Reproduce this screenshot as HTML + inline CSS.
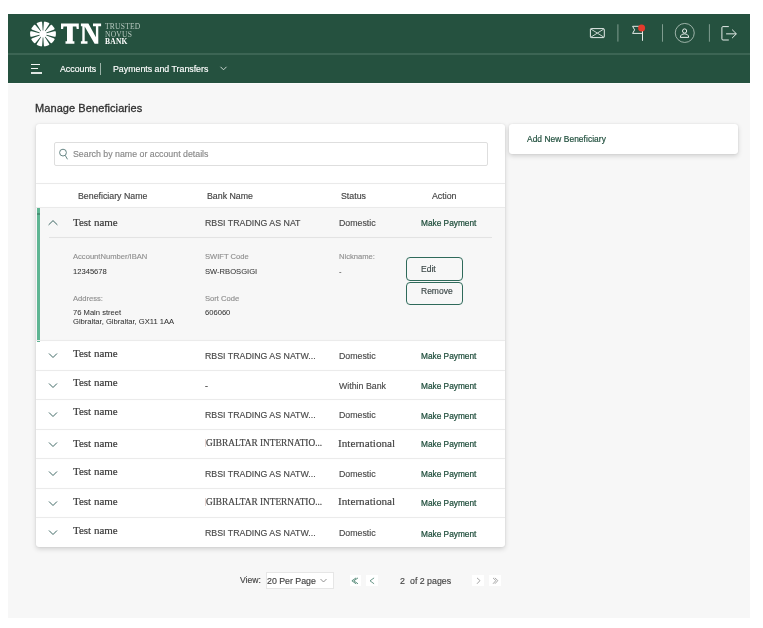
<!DOCTYPE html>
<html><head><meta charset="utf-8">
<style>
html,body{margin:0;padding:0;background:#fff;width:763px;height:628px;overflow:hidden;}
body{position:relative;font-family:"Liberation Sans",sans-serif;}
.a{position:absolute;white-space:nowrap;line-height:1;will-change:transform;-webkit-text-stroke:0.15px currentColor;}
.sf{font-family:"Liberation Serif",serif;-webkit-text-stroke:0.18px currentColor;}
#page{position:absolute;left:8px;top:14px;width:742px;height:604px;background:#f7f7f7;}
#hdr{position:absolute;left:8px;top:14px;width:742px;height:69px;background:#25513f;}
#sep{position:absolute;left:8px;top:53px;width:742px;height:2px;background:#3c6554;}
.card{position:absolute;background:#fff;border-radius:3px;box-shadow:0 0 1.5px rgba(0,0,0,0.10),0 2px 5px rgba(0,0,0,0.16);}
.hl{position:absolute;height:1px;background:#ebebeb;box-shadow:0 0 1px rgba(0,0,0,0.04);}
.nav{color:#fff;font-size:8.8px;}
.th{color:#444;font-size:8.8px;}
.tn{color:#3a3a3a;font-size:11px;}
.bk{color:#4a4a4a;font-size:8.8px;}
.mp{color:#1e4d3b;font-size:8.3px;letter-spacing:0;-webkit-text-stroke:0.22px #1e4d3b;}
.lb{color:#909090;font-size:7.6px;}
.vl{color:#333;font-size:7.6px;-webkit-text-stroke:0.05px currentColor;}
.vdiv{position:absolute;width:1px;background:#8aa59a;}
</style></head><body>
<div id="page"></div>
<div id="hdr"></div>
<div id="sep"></div>
<div class="a" style="left:8px;top:83px;width:742px;height:1px;background:#fbfbfb"></div>

<!-- logo flower -->
<svg class="a" style="left:28.8px;top:20.5px" width="28" height="26" viewBox="-14 -13 28 26">
  <ellipse cx="0" cy="0" rx="12.9" ry="12.4" fill="#fff"/>
  <g fill="#25513f">
    <polygon points="-0.3,-3.6 0.3,-3.6 0.85,-11.5 1.6,-14 -1.6,-14 -0.85,-11.5" transform="rotate(0)"/>
    <polygon points="-0.3,-3.6 0.3,-3.6 0.85,-11.5 1.6,-14 -1.6,-14 -0.85,-11.5" transform="rotate(36)"/>
    <polygon points="-0.3,-3.6 0.3,-3.6 0.85,-11.5 1.6,-14 -1.6,-14 -0.85,-11.5" transform="rotate(72)"/>
    <polygon points="-0.3,-3.6 0.3,-3.6 0.85,-11.5 1.6,-14 -1.6,-14 -0.85,-11.5" transform="rotate(108)"/>
    <polygon points="-0.3,-3.6 0.3,-3.6 0.85,-11.5 1.6,-14 -1.6,-14 -0.85,-11.5" transform="rotate(144)"/>
    <polygon points="-0.3,-3.6 0.3,-3.6 0.85,-11.5 1.6,-14 -1.6,-14 -0.85,-11.5" transform="rotate(180)"/>
    <polygon points="-0.3,-3.6 0.3,-3.6 0.85,-11.5 1.6,-14 -1.6,-14 -0.85,-11.5" transform="rotate(216)"/>
    <polygon points="-0.3,-3.6 0.3,-3.6 0.85,-11.5 1.6,-14 -1.6,-14 -0.85,-11.5" transform="rotate(252)"/>
    <polygon points="-0.3,-3.6 0.3,-3.6 0.85,-11.5 1.6,-14 -1.6,-14 -0.85,-11.5" transform="rotate(288)"/>
    <polygon points="-0.3,-3.6 0.3,-3.6 0.85,-11.5 1.6,-14 -1.6,-14 -0.85,-11.5" transform="rotate(324)"/>
  </g>
</svg>
<svg class="a" style="left:0;top:0" width="110" height="50" viewBox="0 0 110 50">
  <path fill="#fff" d="M61 23.6 H78.8 V29 H76.7 L76.3 26.4 H72.8 V41.3 H74.4 V43.8 H65.5 V41.3 H67 V26.4 H63.5 L63.1 29 H61 Z"/>
  <path fill="#fff" d="M80.9 23.6 H88.4 L95.9 37.2 V26.3 H93 V23.6 H101.1 V26.3 H98.3 V43.8 H94.6 L84.7 26.6 V41.3 H87.5 V43.8 H80.9 V41.3 H82.3 V26.3 H80.9 Z"/>
</svg>
<div class="a sf" style="left:105px;top:23.2px;font-size:7.5px;color:#b8c9c0;letter-spacing:0.25px;-webkit-text-stroke:0">TRUSTED</div>
<div class="a sf" style="left:105px;top:30.8px;font-size:7.5px;color:#b8c9c0;letter-spacing:0.25px;-webkit-text-stroke:0">NOVUS</div>
<div class="a sf" style="left:105px;top:38.3px;font-size:7.5px;color:#fff;font-weight:bold;letter-spacing:0.25px;-webkit-text-stroke:0">BANK</div>

<!-- header right icons -->
<svg class="a" style="left:0;top:0" width="763" height="60" viewBox="0 0 763 60">
  <g fill="none" stroke="#e6ece9" stroke-width="1">
    <rect x="590.4" y="28.6" width="13.9" height="9" rx="0.8"/>
    <path d="M590.8 29 L597.35 33.1 L603.9 29 M590.8 37.2 L597.35 33.1 L603.9 37.2" stroke-width="0.85"/>
    <path d="M642.5 26 V40.8 M642.5 26.3 H632.6 L634.6 29.85 L632.6 33.4 H642.5"/>
    <circle cx="684.75" cy="32.95" r="9.5" stroke="#b3c5bc" stroke-width="0.85"/>
    <circle cx="684.6" cy="31" r="2.1"/>
    <path d="M680.3 37.4 C680.3 34.8 682.4 33.9 684.5 33.9 C686.6 33.9 688.7 34.8 688.7 37.4 Z"/>
    <path d="M728.8 26.6 H723 Q721.9 26.6 721.9 27.7 V38.9 Q721.9 40 723 40 H728.8"/>
    <path d="M726.1 33.85 H736.2 M732.1 29.6 L736.4 33.85 L732.1 38.1"/>
  </g>
  <circle cx="641.6" cy="27.9" r="3.5" fill="#e53a2c"/>
  <g fill="#7f9c8f">
    <rect x="617.4" y="24.3" width="1" height="17.3"/>
    <rect x="662" y="24.2" width="1" height="17.5"/>
    <rect x="708.9" y="24.2" width="1" height="17.5"/>
  </g>
</svg>

<!-- nav -->
<div class="a" style="left:30.5px;top:64px;width:8.5px;height:1px;background:#f2f5f3"></div>
<div class="a" style="left:30.5px;top:68.2px;width:6.5px;height:1px;background:#f2f5f3"></div>
<div class="a" style="left:30.5px;top:72.3px;width:10.6px;height:1.5px;background:#dfe6e2"></div>
<div class="a nav" style="left:60px;top:65.1px">Accounts</div>
<div class="vdiv" style="left:100.3px;top:62.5px;height:12px;background:#9bb3a8"></div>
<div class="a nav" style="left:113px;top:65.1px">Payments and Transfers</div>
<svg class="a" style="left:219px;top:65px" width="9" height="7" viewBox="0 0 9 7">
  <path d="M1.5 1.8 L4.5 4.8 L7.5 1.8" fill="none" stroke="#dfe6e2" stroke-width="0.9"/>
</svg>

<!-- title -->
<div class="a" style="left:35.3px;top:102.7px;font-size:11px;color:#2f2f2f;letter-spacing:0.08px;-webkit-text-stroke:0.3px currentColor">Manage Beneficiaries</div>

<!-- main card -->
<div class="card" style="left:36px;top:124px;width:468.7px;height:423px;"></div>
<!-- search -->
<div class="a" style="left:54px;top:142px;width:431.5px;height:21.5px;border:1px solid #dedede;border-radius:2px;background:#fff"></div>
<svg class="a" style="left:57px;top:147px" width="13" height="14" viewBox="0 0 13 14">
  <circle cx="6" cy="5.6" r="3.4" fill="none" stroke="#5f807e" stroke-width="0.95"/>
  <path d="M8.2 8.4 L10.5 12.3" fill="none" stroke="#5f807e" stroke-width="0.95"/>
</svg>
<div class="a" style="left:72.6px;top:149.6px;font-size:8.8px;color:#888">Search by name or account details</div>

<!-- header row -->
<div class="hl" style="left:36px;top:183px;width:468.5px;background:#eaeaea"></div>
<div class="hl" style="left:36px;top:207px;width:468.5px;background:#eaeaea"></div>
<div class="a th" style="left:77.5px;top:192.3px">Beneficiary Name</div>
<div class="a th" style="left:207px;top:192.3px">Bank Name</div>
<div class="a th" style="left:340.5px;top:192.3px">Status</div>
<div class="a th" style="left:432px;top:192.3px">Action</div>

<!-- expanded row -->
<div class="a" style="left:36px;top:207.5px;width:468.5px;height:133px;background:#f7f7f7"></div>
<div class="a" style="left:36.5px;top:207.5px;width:3px;height:133.6px;background:#5fb593"></div>
<div class="a" style="left:36.5px;top:213px;width:3px;height:1.6px;background:#4a8f74"></div>
<svg class="a" style="left:47px;top:218px" width="12" height="9" viewBox="0 0 12 9">
  <path d="M1.6 6.9 L6 2.6 L10.4 6.9" fill="none" stroke="#335f5c" stroke-width="0.95"/>
</svg>
<div class="a sf tn" style="left:73px;top:216.9px">Test name</div>
<div class="a bk" style="left:204.5px;top:219px">RBSI TRADING AS NAT</div>
<div class="a bk" style="left:338.6px;top:219px">Domestic</div>
<div class="a mp" style="left:420.5px;top:219.2px">Make Payment</div>
<div class="hl" style="left:48.5px;top:237px;width:443.5px;background:#e3e3e3"></div>

<div class="a lb" style="left:73px;top:252.6px">AccountNumber/IBAN</div>
<div class="a vl" style="left:73px;top:268.1px">12345678</div>
<div class="a lb" style="left:73px;top:294.9px">Address:</div>
<div class="a vl" style="left:73px;top:308.5px">76 Main street</div>
<div class="a vl" style="left:73px;top:317.6px">Gibraltar, Gibraltar, GX11 1AA</div>

<div class="a lb" style="left:204.7px;top:252.6px">SWIFT Code</div>
<div class="a vl" style="left:204.7px;top:268.1px">SW-RBOSGIGI</div>
<div class="a lb" style="left:204.7px;top:294.9px">Sort Code</div>
<div class="a vl" style="left:204.7px;top:308.5px">606060</div>

<div class="a lb" style="left:338.6px;top:253.2px">Nickname:</div>
<div class="a vl" style="left:338.6px;top:268.1px">-</div>

<div class="a" style="left:406px;top:257.3px;width:55px;height:21.8px;border:1px solid #2f6a5a;border-radius:4px;"></div>
<div class="a" style="left:406px;top:281.5px;width:55px;height:20.8px;border:1px solid #2f6a5a;border-radius:4px;"></div>
<div class="a" style="left:420.7px;top:265px;font-size:8.5px;color:#3a4646">Edit</div>
<div class="a" style="left:420.7px;top:286.8px;font-size:8.5px;color:#3a4646">Remove</div>

<div class="hl" style="left:36px;top:340.3px;width:468.5px;"></div>

<div id="rows"></div>
<svg class="a" style="left:47px;top:351.3px" width="12" height="9" viewBox="0 0 12 9"><path d="M2 2.5 L6 6.5 L10 2.5" fill="none" stroke="#335f5c" stroke-width="0.95"/></svg>
<div class="a sf tn" style="left:73px;top:347.9px">Test name</div>
<div class="a bk" style="left:204.7px;top:351.7px">RBSI TRADING AS NATW...</div>
<div class="a bk" style="left:338.8px;top:351.7px">Domestic</div>
<div class="a mp" style="left:420.7px;top:352.2px">Make Payment</div>
<div class="hl" style="left:36px;top:369.6px;width:469px;"></div>
<svg class="a" style="left:47px;top:380.8px" width="12" height="9" viewBox="0 0 12 9"><path d="M2 2.5 L6 6.5 L10 2.5" fill="none" stroke="#335f5c" stroke-width="0.95"/></svg>
<div class="a sf tn" style="left:73px;top:376.8px">Test name</div>
<div class="a bk" style="left:204.7px;top:381.6px">-</div>
<div class="a bk" style="left:338.8px;top:381.6px">Within Bank</div>
<div class="a mp" style="left:420.7px;top:382.1px">Make Payment</div>
<div class="hl" style="left:36px;top:398.9px;width:469px;"></div>
<svg class="a" style="left:47px;top:410.1px" width="12" height="9" viewBox="0 0 12 9"><path d="M2 2.5 L6 6.5 L10 2.5" fill="none" stroke="#335f5c" stroke-width="0.95"/></svg>
<div class="a sf tn" style="left:73px;top:405.9px">Test name</div>
<div class="a bk" style="left:204.7px;top:411.2px">RBSI TRADING AS NATW...</div>
<div class="a bk" style="left:338.8px;top:411.2px">Domestic</div>
<div class="a mp" style="left:420.7px;top:411.7px">Make Payment</div>
<div class="hl" style="left:36px;top:428.8px;width:469px;"></div>
<svg class="a" style="left:47px;top:440.0px" width="12" height="9" viewBox="0 0 12 9"><path d="M2 2.5 L6 6.5 L10 2.5" fill="none" stroke="#335f5c" stroke-width="0.95"/></svg>
<div class="a sf tn" style="left:73px;top:437.7px">Test name</div>
<div class="a sf" style="left:205.5px;top:439.1px;font-size:9.3px;color:#444">GIBRALTAR INTERNATIO...</div>
<div class="a" style="left:204.8px;top:439.3px;width:0.5px;height:8px;background:#e6d3cd"></div>
<div class="a sf" style="left:338.2px;top:437.5px;font-size:11.2px;color:#444">International</div>
<div class="a mp" style="left:420.7px;top:439.8px">Make Payment</div>
<div class="hl" style="left:36px;top:458.0px;width:469px;"></div>
<svg class="a" style="left:47px;top:469.2px" width="12" height="9" viewBox="0 0 12 9"><path d="M2 2.5 L6 6.5 L10 2.5" fill="none" stroke="#335f5c" stroke-width="0.95"/></svg>
<div class="a sf tn" style="left:73px;top:465.8px">Test name</div>
<div class="a bk" style="left:204.7px;top:469.6px">RBSI TRADING AS NATW...</div>
<div class="a bk" style="left:338.8px;top:469.6px">Domestic</div>
<div class="a mp" style="left:420.7px;top:470.1px">Make Payment</div>
<div class="hl" style="left:36px;top:487.7px;width:469px;"></div>
<svg class="a" style="left:47px;top:498.9px" width="12" height="9" viewBox="0 0 12 9"><path d="M2 2.5 L6 6.5 L10 2.5" fill="none" stroke="#335f5c" stroke-width="0.95"/></svg>
<div class="a sf tn" style="left:73px;top:496.2px">Test name</div>
<div class="a sf" style="left:205.5px;top:497.8px;font-size:9.3px;color:#444">GIBRALTAR INTERNATIO...</div>
<div class="a" style="left:204.8px;top:498.0px;width:0.5px;height:8px;background:#e6d3cd"></div>
<div class="a sf" style="left:338.2px;top:496.2px;font-size:11.2px;color:#444">International</div>
<div class="a mp" style="left:420.7px;top:498.5px">Make Payment</div>
<div class="hl" style="left:36px;top:517.2px;width:469px;"></div>
<svg class="a" style="left:47px;top:528.4px" width="12" height="9" viewBox="0 0 12 9"><path d="M2 2.5 L6 6.5 L10 2.5" fill="none" stroke="#335f5c" stroke-width="0.95"/></svg>
<div class="a sf tn" style="left:73px;top:525.2px">Test name</div>
<div class="a bk" style="left:204.7px;top:529.0px">RBSI TRADING AS NATW...</div>
<div class="a bk" style="left:338.8px;top:529.0px">Domestic</div>
<div class="a mp" style="left:420.7px;top:529.5px">Make Payment</div>

<!-- right card -->
<div class="card" style="left:509px;top:124px;width:229px;height:30px;"></div>
<div class="a mp" style="left:527.2px;top:135.3px;font-size:8.4px;letter-spacing:0.06px;-webkit-text-stroke:0.18px currentColor">Add New Beneficiary</div>

<!-- pagination -->
<div class="a" style="left:240px;top:576px;font-size:8.6px;color:#444">View:</div>
<div class="a" style="left:266.3px;top:572px;width:66px;height:14.5px;border:1px solid #e6e6e6;background:#fff"></div>
<div class="a" style="left:267.2px;top:576.8px;font-size:8.8px;color:#444">20 Per Page</div>
<svg class="a" style="left:319px;top:577px" width="9" height="7" viewBox="0 0 9 7">
  <path d="M1.5 2 L4.5 5 L7.5 2" fill="none" stroke="#777" stroke-width="0.8"/>
</svg>
<div class="a" style="left:349.8px;top:575px;width:11.3px;height:11.2px;background:#fff"></div>
<div class="a" style="left:366px;top:575px;width:11.6px;height:11.2px;background:#fff"></div>
<div class="a" style="left:472.2px;top:575px;width:11.8px;height:11.2px;background:#fff"></div>
<div class="a" style="left:489px;top:575px;width:11.6px;height:11.2px;background:#fff"></div>
<svg class="a" style="left:0;top:0;overflow:visible" width="763" height="628" viewBox="0 0 763 628">
  <path d="M356.1 577.9 L351.9 580.8 L356.1 583.8 M358 577.9 L353.8 580.8 L358 583.8" fill="none" stroke="#4c8371" stroke-width="0.9"/>
  <path d="M374.1 577.9 L370 580.8 L374.1 583.8" fill="none" stroke="#5b8c7d" stroke-width="0.9"/>
  <path d="M477 577.9 L480 580.6 L477 583.8" fill="none" stroke="#9a9a9a" stroke-width="0.9"/>
  <path d="M493 577.9 L495.8 580.6 L493 583.8 M494.9 577.9 L497.8 580.6 L494.9 583.8" fill="none" stroke="#a0a0a0" stroke-width="0.9"/>
</svg>
<div class="a" style="left:399.7px;top:576.5px;font-size:8.8px;color:#444">2</div>
<div class="a" style="left:409.7px;top:576.5px;font-size:8.8px;color:#444">of 2 pages</div>
</body></html>
